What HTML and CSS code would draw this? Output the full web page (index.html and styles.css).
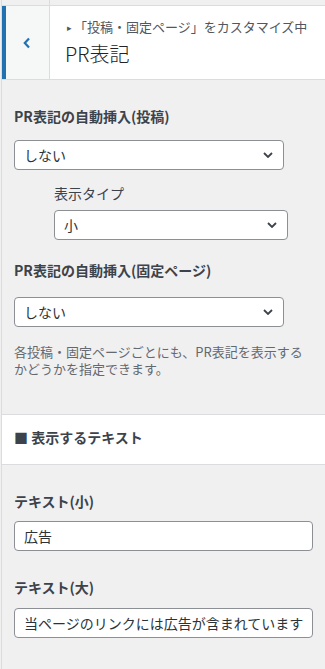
FILE: index.html
```html
<!DOCTYPE html>
<html lang="ja">
<head>
  <meta charset="UTF-8" />
  <meta name="viewport" content="width=device-width, initial-scale=1.0" />
  <title>PR表記</title>
  <link rel="stylesheet" href="styles.css">
</head>
<body>
  <div class="sidebar">
    <div class="top-strip">
      <div class="strip-left"></div>
      <div class="strip-right"></div>
    </div>

    <header class="panel-head">
      <button class="back" type="button" aria-label="戻る">
        <svg width="10" height="12" viewBox="0 0 10 12"><path d="M7 1.5 L2.8 6 L7 10.5" fill="none" stroke="#2271b1" stroke-width="2.2"/></svg>
      </button>
      <div class="head-text">
        <div class="crumb"><span class="tri">▸</span>「投稿・固定ページ」をカスタマイズ中</div>
        <h1>PR表記</h1>
      </div>
    </header>

    <section class="content">
      <div class="label first">PR表記の自動挿入(投稿)</div>
      <div class="select wide gap-14">
        <select><option>しない</option></select>
        <svg class="chev" width="10" height="6" viewBox="0 0 10 6"><path d="M1 1 L5 5 L9 1" fill="none" stroke="#3c434a" stroke-width="1.8"/></svg>
      </div>

      <div class="sub">
        <div class="sub-label">表示タイプ</div>
        <div class="select narrow">
          <select><option>小</option></select>
          <svg class="chev" width="10" height="6" viewBox="0 0 10 6"><path d="M1 1 L5 5 L9 1" fill="none" stroke="#3c434a" stroke-width="1.8"/></svg>
        </div>
      </div>

      <div class="label l3">PR表記の自動挿入(固定ページ)</div>
      <div class="select wide gap-17">
        <select><option>しない</option></select>
        <svg class="chev" width="10" height="6" viewBox="0 0 10 6"><path d="M1 1 L5 5 L9 1" fill="none" stroke="#3c434a" stroke-width="1.8"/></svg>
      </div>
      <p class="desc">各投稿・固定ページごとにも、PR表記を表示するかどうかを指定できます。</p>
    </section>

    <div class="band">■ 表示するテキスト</div>

    <section class="content">
      <div class="label l-text">テキスト(小)</div>
      <input class="text-input gap-10" type="text" value="広告" />
      <div class="label l-text">テキスト(大)</div>
      <input class="text-input gap-11" type="text" value="当ページのリンクには広告が含まれています" />
    </section>
  </div>
</body>
</html>
```
FILE: styles.css
```css
body {
  margin: 0;
  background: #f0f0f1;
  font-family: "Noto Sans CJK JP", "Noto Sans", sans-serif;
  color: #2c3338;
}
.sidebar {
  margin-left: 1px;
  border-left: 1px solid #dcdcde;
  min-height: 669px;
  overflow: hidden;
}
.top-strip {
  display: flex;
  height: 5px;
  border-bottom: 1px solid #dcdcde;
}
.strip-left {
  width: 47px;
  border-right: 1px solid #dcdcde;
}
.panel-head {
  display: flex;
  height: 73px;
  background: #fff;
  border-bottom: 1px solid #dcdcde;
}
.back {
  width: 48px;
  padding: 0;
  border: 0;
  border-left: 4px solid #2271b1;
  border-right: 1px solid #dcdcde;
  background: #f6f7f7;
  display: flex;
  align-items: center;
  justify-content: center;
  padding-right: 2px;
}
.head-text {
  padding: 11px 0 0 15px;
}
.crumb {
  font-size: 13px;
  line-height: 20px;
  color: #50575e;
  white-space: nowrap;
}
.tri {
  font-size: 9px;
  margin: 0 2px 0 2px;
  vertical-align: 1px;
}
h1 {
  margin: 3px 0 0;
  font-size: 20px;
  line-height: 26px;
  font-weight: 300;
  color: #1d2327;
}
.content {
  padding: 0 12px 0 12px;
}
.label {
  font-size: 14px;
  line-height: 20px;
  font-weight: 700;
  color: #3c434a;
}
.label.first { margin-top: 26px; }
.label.l3 { margin-top: 20px; }
.label.l-text { margin-top: 26px; }
.select {
  position: relative;
  height: 30px;
}
.select select {
  appearance: none;
  -webkit-appearance: none;
  width: 100%;
  height: 30px;
  border: 1px solid #8c8f94;
  border-radius: 4px;
  background: #fff;
  padding: 0 30px 0 9px;
  font-family: inherit;
  font-size: 14px;
  color: #2c3338;
}
.chev {
  position: absolute;
  right: 11px;
  top: 12px;
  pointer-events: none;
}
.wide { width: 270px; }
.narrow { width: 234px; }
.gap-14 { margin-top: 14px; }
.gap-17 { margin-top: 17px; }
.gap-10 { margin-top: 10px; }
.gap-11 { margin-top: 11px; }
.sub {
  padding-left: 40px;
}
.sub-label {
  margin-top: 13px;
  font-size: 14px;
  line-height: 20px;
  color: #3c434a;
}
.sub .select { margin-top: 7px; }
.desc {
  margin: 16px 0 0;
  font-size: 13px;
  line-height: 17px;
  color: #646970;
  width: 300px;
}
.band {
  margin-top: 37px;
  background: #fff;
  border-top: 1px solid #dcdcde;
  border-bottom: 1px solid #dcdcde;
  padding: 12px 12px 17px;
  font-size: 14px;
  line-height: 20px;
  font-weight: 700;
  color: #3c434a;
}
.text-input {
  display: block;
  box-sizing: border-box;
  width: 299px;
  height: 30px;
  border: 1px solid #8c8f94;
  border-radius: 4px;
  background: #fff;
  padding: 0 6px 0 9px;
  font-family: inherit;
  font-size: 14px;
  color: #2c3338;
}
```
